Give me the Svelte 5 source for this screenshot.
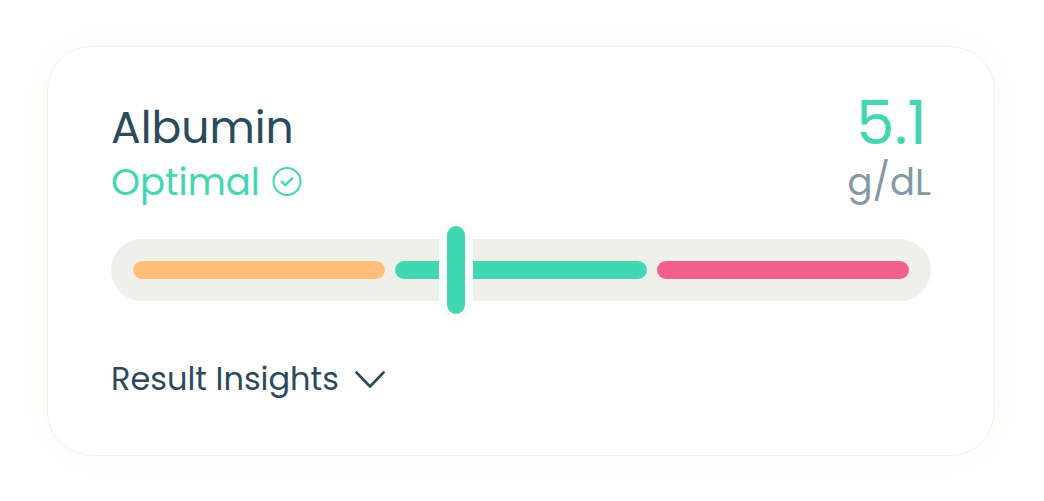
<script lang="ts">
	interface Segment {
		label: string;
		color: string;
	}

	interface Props {
		name?: string;
		status?: string;
		value?: number;
		unit?: string;
		position?: number;
		segments?: Segment[];
	}

	let {
		name = 'Albumin',
		status = 'Optimal',
		value = 5.1,
		unit = 'g/dL',
		position = 42.1,
		segments = [
			{ label: 'low', color: '#ffbf7b' },
			{ label: 'optimal', color: '#43d6b3' },
			{ label: 'high', color: '#f3608a' }
		]
	}: Props = $props();

	let expanded = $state(false);
</script>

<main>
	<article class="card">
		<header>
			<div>
				<h2>{name}</h2>
				<p class="status">
					{status}
					<svg width="30" height="30" viewBox="0 0 30 30" fill="none" stroke="currentColor" stroke-width="2" stroke-linecap="round" stroke-linejoin="round" aria-hidden="true">
						<circle cx="15" cy="14.5" r="13.5" />
						<path stroke-width="2.3" d="m9.7 14.7 3.6 3.4 7-7" />
					</svg>
				</p>
			</div>
			<div class="result">
				<span class="value">{value}</span>
				<span class="unit">{unit}</span>
			</div>
		</header>

		<div class="range">
			{#each segments as segment (segment.label)}
				<span class="segment" style:background-color={segment.color}></span>
			{/each}
			<span class="marker" style:left="{position}%"></span>
		</div>

		<button type="button" class="insights" aria-expanded={expanded} onclick={() => (expanded = !expanded)}>
			Result Insights
			<svg class:expanded width="30" height="18" viewBox="0 0 30 18" fill="none" stroke="currentColor" stroke-width="2.6" stroke-linecap="round" stroke-linejoin="round" aria-hidden="true">
				<path d="m1.5 2.5 13.5 14 13.5-14" />
			</svg>
		</button>
	</article>
</main>

<style>
	:global(body) {
		margin: 0;
		background-color: #fff;
	}

	main {
		padding: 46px 49px 45px 47px;
		font-family: Poppins, Inter, sans-serif;
		color: #294b5c;
	}

	.card {
		padding: 44px 63px 56px;
		background-color: #fff;
		border: 1px solid #f0f0f0;
		border-radius: 45px;
		box-shadow: 0 0 40px rgba(110, 110, 50, 0.045);
	}

	header {
		display: flex;
		align-items: flex-end;
		justify-content: space-between;
	}

	h2 {
		margin: 0;
		font-size: 44px;
		font-weight: 400;
		line-height: 54px;
	}

	.status {
		display: flex;
		align-items: center;
		gap: 12px;
		margin: 0;
		font-size: 37px;
		line-height: 54px;
		color: #43d6b3;
	}

	.result {
		display: flex;
		flex-direction: column;
		align-items: flex-end;
	}

	.value {
		padding-right: 4px;
		font-size: 61px;
		line-height: 64px;
		color: #43d6b3;
	}

	.unit {
		font-size: 37px;
		line-height: 54px;
		color: #8499a5;
	}

	.range {
		position: relative;
		display: flex;
		align-items: center;
		gap: 10px;
		height: 62px;
		margin-top: 30px;
		padding: 0 22px;
		box-sizing: border-box;
		background-color: #eff0ea;
		border-radius: 31px;
	}

	.segment {
		flex: 1;
		height: 18px;
		border-radius: 9px;
	}

	/* Sits over the track, with a light halo cutting through it */
	.marker {
		position: absolute;
		top: 50%;
		width: 18px;
		height: 88px;
		border: 8px solid #fcfcfc;
		border-radius: 17px;
		background-color: #43d6b3;
		transform: translate(-50%, -50%);
	}

	.insights {
		display: flex;
		align-items: center;
		gap: 16px;
		margin-top: 58px;
		padding: 0;
		background: none;
		border: none;
		font: inherit;
		font-size: 32px;
		line-height: 40px;
		color: inherit;
		cursor: pointer;
	}

	.insights svg {
		transition: transform 0.2s;
	}

	.insights svg.expanded {
		transform: rotate(180deg);
	}
</style>
